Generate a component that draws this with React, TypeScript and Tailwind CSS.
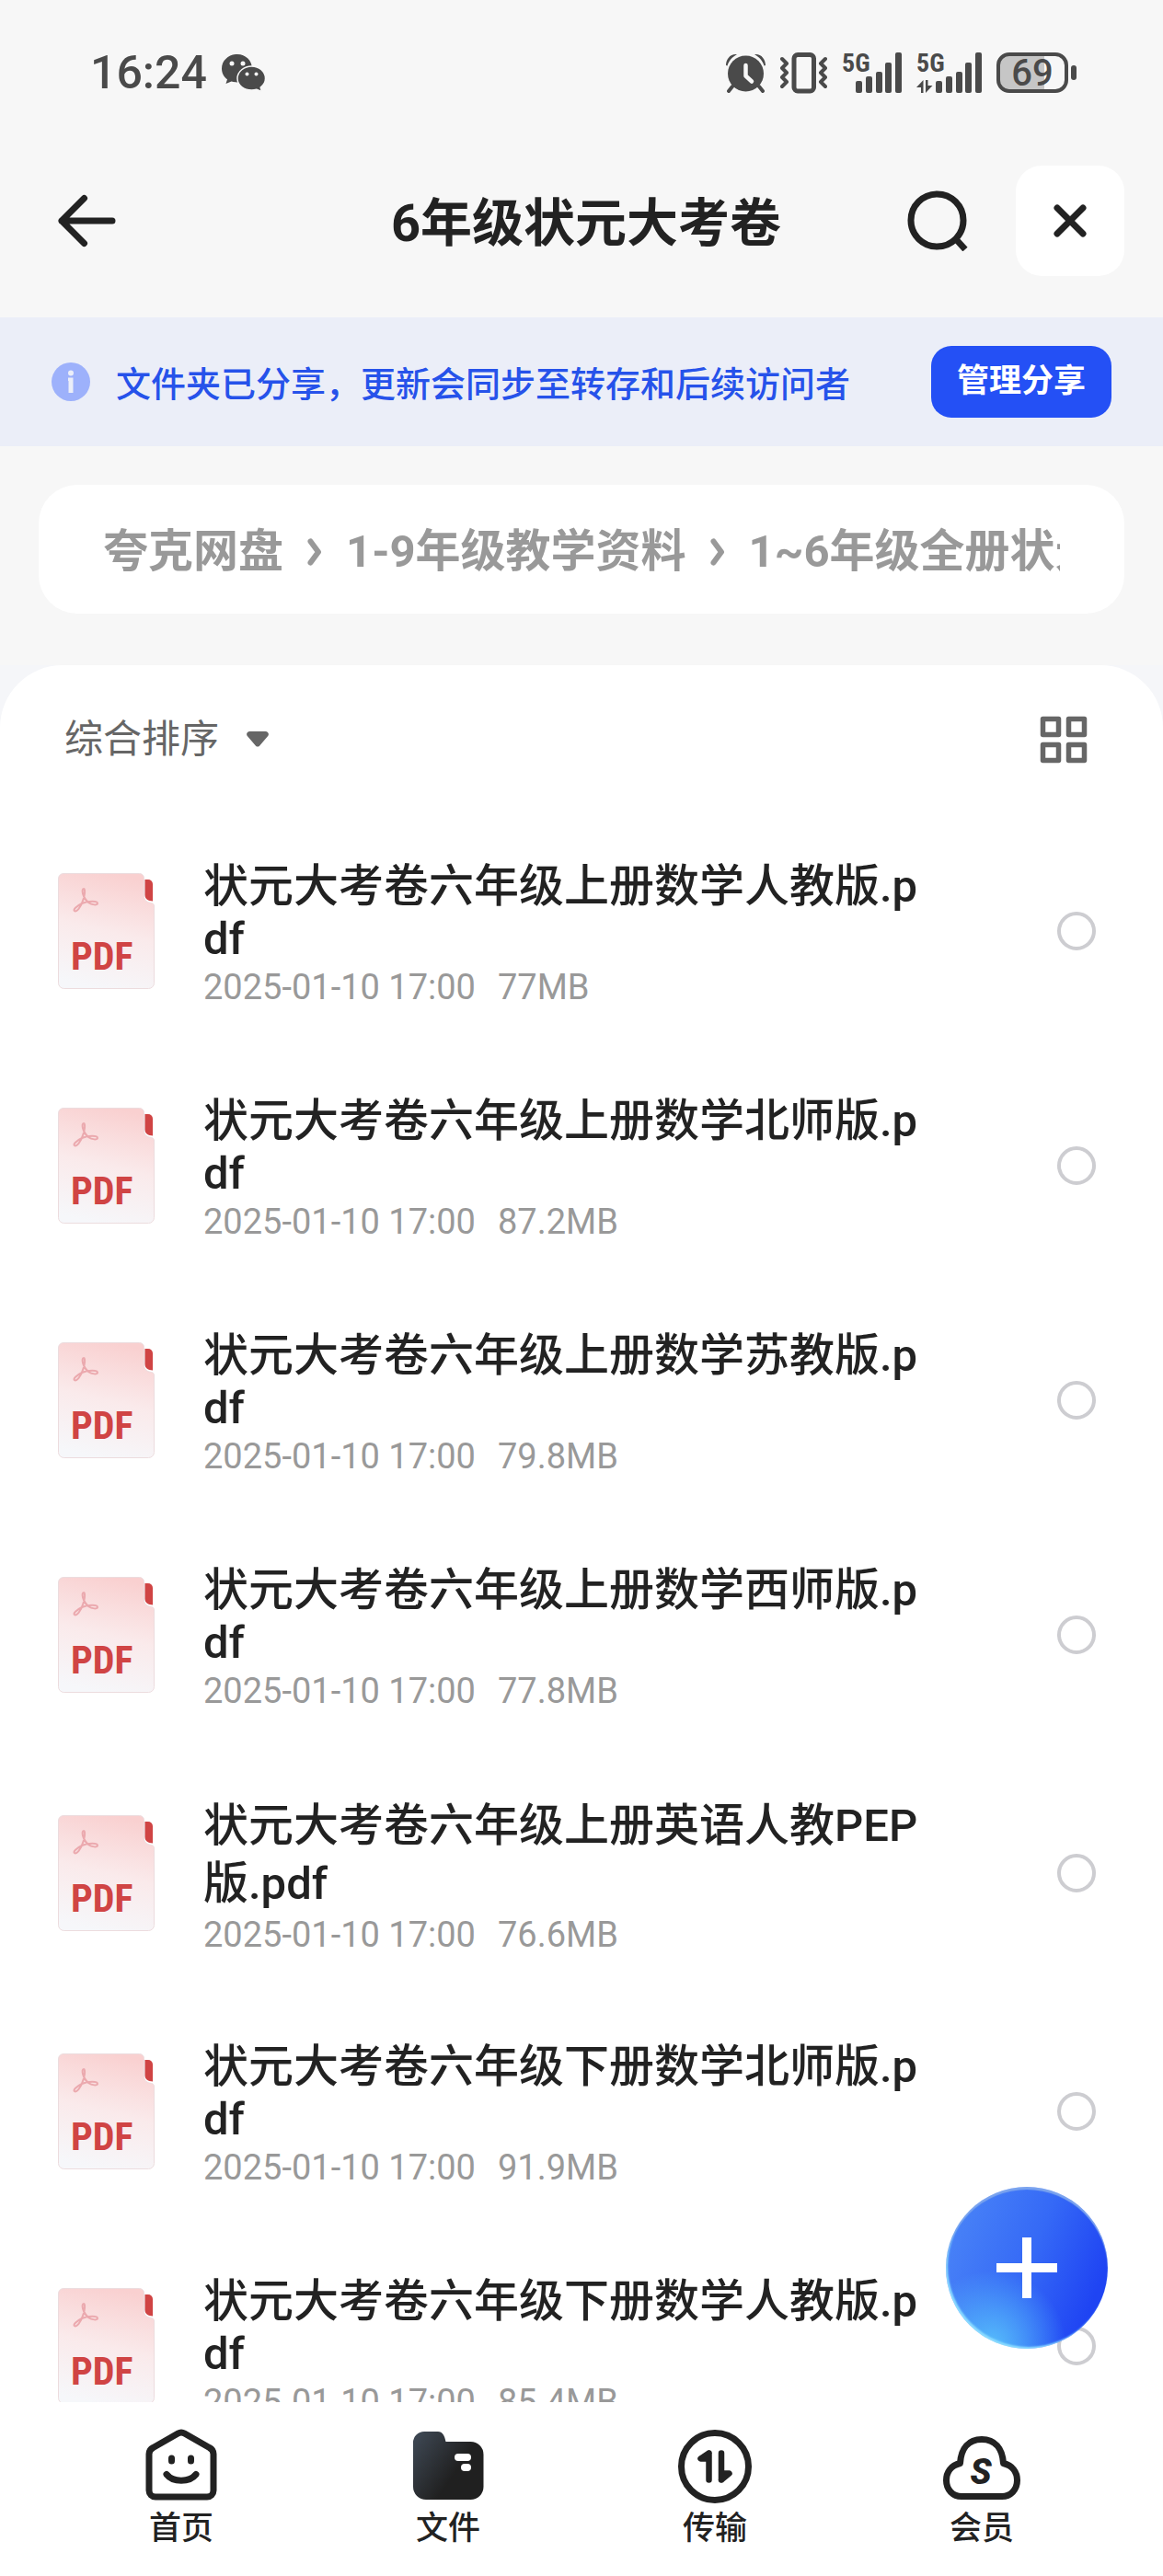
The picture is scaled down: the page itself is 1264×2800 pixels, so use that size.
import type { ReactNode } from 'react'

type FileItem = { name: string; date: string; size: string; tall?: boolean }

const files: FileItem[] = [
    { name: '状元大考卷六年级上册数学人教版.pdf', date: '2025-01-10 17:00', size: '77MB' },
    { name: '状元大考卷六年级上册数学北师版.pdf', date: '2025-01-10 17:00', size: '87.2MB' },
    { name: '状元大考卷六年级上册数学苏教版.pdf', date: '2025-01-10 17:00', size: '79.8MB' },
    { name: '状元大考卷六年级上册数学西师版.pdf', date: '2025-01-10 17:00', size: '77.8MB' },
    { name: '状元大考卷六年级上册英语人教PEP版.pdf', date: '2025-01-10 17:00', size: '76.6MB', tall: true },
    { name: '状元大考卷六年级下册数学北师版.pdf', date: '2025-01-10 17:00', size: '91.9MB' },
    { name: '状元大考卷六年级下册数学人教版.pdf', date: '2025-01-10 17:00', size: '85.4MB' },
]

const crumbs = ['夸克网盘', '1-9年级教学资料', '1~6年级全册状元大考卷']

const narrow = "'Liberation Sans Narrow', 'Roboto Condensed', Roboto, sans-serif"

function WechatIcon() {
    return (
        <svg width="48" height="42" viewBox="0 0 48 42" aria-hidden="true">
            <path
                fill="#4a4a4a"
                d="M17 1C8 1 0 7.500 0 16.500c0 5 2.300 9 6 11.700L4.500 33l6-2.600c2 .6 4.300 1 6.500 1C26 31.400 33 25 33 16.500S26 1 17 1Z"
            />
            <circle cx="11" cy="11" r="2.500" fill="#f7f7f7" />
            <circle cx="23" cy="11" r="2.500" fill="#f7f7f7" />
            <path
                fill="#4a4a4a"
                stroke="#f7f7f7"
                strokeWidth="1.500"
                d="M32.500 14C24.500 14 17 19.500 17 27.300S24.500 40 32.500 40c2 0 3.700-.3 5.400-.8L43.500 41.500l-1.300-4.500c3.300-2.400 5.300-5.800 5.300-9.700C47.500 19.500 40.500 14 32.500 14Z"
            />
            <circle cx="27.500" cy="22.500" r="2" fill="#f7f7f7" />
            <circle cx="37.500" cy="22.500" r="2" fill="#f7f7f7" />
        </svg>
    )
}

function AlarmIcon() {
    return (
        <svg width="43" height="44" viewBox="0 0 43 44" fill="none" aria-hidden="true">
            <circle cx="21.500" cy="23" r="19.500" fill="#4a4a4a" />
            <path d="M7 37l-4 5M36 37l4 5" stroke="#4a4a4a" strokeWidth="4" strokeLinecap="round" />
            <path d="M0 14C0 7 5 1 12 2 7 5 3 9 1.500 14.500ZM43 14C43 7 38 1 31 2c5 3 9 7 10.500 12.500Z" fill="#4a4a4a" />
            <path d="M21.500 14v11.500l6.500 6" stroke="#f7f7f7" strokeWidth="4.500" strokeLinecap="round" strokeLinejoin="round" />
        </svg>
    )
}

function VibrateIcon() {
    return (
        <svg width="51" height="46" viewBox="0 0 51 46" fill="none" stroke="#4a4a4a" aria-hidden="true">
            <rect x="15" y="3.500" width="21.500" height="39.500" rx="4" strokeWidth="5" />
            <path
                d="M2 8l5 5-5 5 5 5-5 5 5 5-5 5M49 8l-5 5 5 5-5 5 5 5-5 5 5 5"
                strokeWidth="4"
                strokeLinecap="round"
                strokeLinejoin="round"
            />
        </svg>
    )
}

const bars = [
    { x: 0, y: 31 },
    { x: 11, y: 26 },
    { x: 22, y: 21 },
    { x: 32, y: 11 },
    { x: 43, y: 0 },
]

function SignalIcon({ active }: { active?: boolean }) {
    const shift = active ? 21 : 15
    return (
        <svg className="overflow-visible" width={shift + 50} height="44" fill="#4a4a4a" aria-hidden="true">
            <text x="0" y="21" fontSize="28" fontWeight="700" fontFamily={narrow}>
                5G
            </text>
            {bars.map((bar) => (
                <rect key={bar.x} x={bar.x + shift} y={bar.y} width="7" height={44 - bar.y} rx="2" />
            ))}
            {active && <path d="M7.500 30v14H5V38H0zM10 44V30h2.500v6H17.500z" />}
        </svg>
    )
}

function BatteryIcon() {
    return (
        <svg className="overflow-visible" width="87" height="44" viewBox="0 0 87 44" aria-hidden="true">
            <path d="M14 4h38v36H14a10 10 0 0 1-10-10V14A10 10 0 0 1 14 4Z" fill="#c6c6c6" />
            <rect x="2" y="2" width="74" height="40" rx="12" fill="none" stroke="#4a4a4a" strokeWidth="4" />
            <rect x="81" y="14" width="6" height="16" rx="3" fill="#4a4a4a" />
            <text x="39" y="36" fontSize="40" fontWeight="500" textAnchor="middle" fill="#4a4a4a" fontFamily="Roboto">
                69
            </text>
        </svg>
    )
}

function PdfIcon() {
    return (
        <svg className="shrink-0" width="105" height="126" viewBox="0 0 105 126" aria-hidden="true">
            <defs>
                <linearGradient id="pdf-sheet" x1="0.600" y1="0" x2="0.400" y2="1">
                    <stop offset="0" stopColor="#f9d0d0" />
                    <stop offset="0.500" stopColor="#faeaeb" />
                    <stop offset="1" stopColor="#f6f7fa" />
                </linearGradient>
            </defs>
            <path
                d="M6 .5h82.500a5 5 0 0 1 5 5V25c0 5 4 7 8 7.500 2 .3 3 1.500 3 3.500v83.500a6 6 0 0 1-6 6H6.500a6 6 0 0 1-6-6V6A5.500 5.500 0 0 1 6 .5Z"
                fill="url(#pdf-sheet)"
                stroke="#ecdcde"
            />
            <path d="M94.500 7h3.500a5 5 0 0 1 5 5v18.500c-5-.5-8.500-2-8.500-7Z" fill="#d04444" />
            <path
                d="M27 30C29 26 30 17 28 17C25 17 27 27 33 32C37 35 43 35 43 33C43 30 33 30 26 33C20 36 16 40 18 41C20 43 25 37 27 30Z"
                fill="none"
                stroke="#eba9ae"
                strokeWidth="2"
            />
            <text x="14" y="105" fontSize="42" fontWeight="700" fill="#d04444" fontFamily={narrow}>
                PDF
            </text>
        </svg>
    )
}

function HomeIcon() {
    return (
        <svg width="84" height="84" viewBox="0 0 84 84" fill="none" stroke="#222" strokeLinecap="round" aria-hidden="true">
            <path
                d="M38.500 6 11.500 21.500A8 8 0 0 0 7 28.500V68a7 7 0 0 0 7 7h56a7 7 0 0 0 7-7V28.500a8 8 0 0 0-4.500-7L45.500 6a7 7 0 0 0-7 0Z"
                strokeWidth="7"
            />
            <path d="M31.500 33v3M52.500 33v3" strokeWidth="7" />
            <path d="M26 50.500c7 9 25 9 32 0" strokeWidth="7" />
        </svg>
    )
}

function FolderIcon() {
    return (
        <svg width="84" height="84" viewBox="0 0 84 84" aria-hidden="true">
            <defs>
                <linearGradient id="folder" x1="0" y1="0.200" x2="0.600" y2="0.600">
                    <stop offset="0" stopColor="#3c4550" />
                    <stop offset="1" stopColor="#202020" />
                </linearGradient>
            </defs>
            <path
                d="M16 4h15c5 0 7 4 8.500 11h27A14 14 0 0 1 80.500 29v35a14 14 0 0 1-14 14H18A14 14 0 0 1 4 64V16A12 12 0 0 1 16 4Z"
                fill="url(#folder)"
            />
            <rect x="49" y="28" width="18" height="8" rx="4" fill="#fff" />
            <rect x="56" y="39" width="11" height="8" rx="4" fill="#fff" />
        </svg>
    )
}

function TransferIcon() {
    return (
        <svg width="84" height="84" viewBox="0 0 84 84" fill="none" stroke="#222" strokeLinecap="round" strokeLinejoin="round" aria-hidden="true">
            <circle cx="42" cy="42" r="36.500" strokeWidth="7" />
            <path d="M35.500 27.500v29M35.500 27.500l-9 6h9" strokeWidth="6.500" />
            <path d="M49 27.500v29M49 56.500l8.500-7H49" strokeWidth="6.500" />
        </svg>
    )
}

function MemberIcon() {
    return (
        <svg width="84" height="84" viewBox="0 0 84 84" fill="none" aria-hidden="true">
            <path
                d="M20 74.500c-9 0-16.500-7-16.500-17.500 0-9 5-16 15-18.500C19.500 22 28 12.500 42 12.500S64.500 22 65.500 38.500c10 2.500 15 9.500 15 18.500 0 10.500-7.500 17.500-16.500 17.500Z"
                stroke="#222"
                strokeWidth="7"
                strokeLinejoin="round"
            />
            <text x="41" y="61" fontSize="38" fontWeight="900" fontStyle="italic" textAnchor="middle" fill="#222">
                S
            </text>
        </svg>
    )
}

function FileRow({ file }: { file: FileItem }) {
    return (
        <li>
            <label className={`flex items-center px-[63px] ${file.tall ? 'h-[263px]' : 'h-[255px]'}`}>
                <PdfIcon />
                <span className="ml-[53px] mr-[130px] flex-1 pt-2">
                    <span
                        className={`block break-all text-[49px] font-medium text-[#222] ${
                            file.tall ? 'leading-[63px]' : 'leading-[57px]'
                        }`}
                    >
                        {file.name}
                    </span>
                    <span className="flex gap-6 text-[38px] leading-[48px] text-[#999]">
                        <span>{file.date}</span>
                        <span>{file.size}</span>
                    </span>
                </span>
                <input
                    type="checkbox"
                    className="mr-2.5 size-[42px] shrink-0 appearance-none rounded-full border-4 border-[#cdcdd1] bg-white checked:border-[#2450f5] checked:bg-[#2450f5]"
                />
            </label>
        </li>
    )
}

function Tab({ label, current, children }: { label: string; current?: boolean; children: ReactNode }) {
    return (
        <a href="#" aria-current={current ? 'page' : undefined} className="flex flex-col items-center gap-1">
            {children}
            <span className="text-[35px] font-medium leading-[44px] text-[#222]">{label}</span>
        </a>
    )
}

export default function App() {
    return (
        <div className="flex h-screen flex-col overflow-hidden bg-[#f7f7f7] font-[Roboto,'Noto_Sans_CJK_SC',sans-serif]">
            <div className="flex h-[158px] shrink-0 items-center justify-between pl-[98px] pr-[94px]">
                <div className="flex items-center gap-4 text-[50px] font-medium text-[#4a4a4a]">
                    <span>16:24</span>
                    <WechatIcon />
                </div>
                <div className="flex items-center gap-4">
                    <AlarmIcon />
                    <VibrateIcon />
                    <SignalIcon />
                    <SignalIcon active />
                    <BatteryIcon />
                </div>
            </div>

            <header className="mb-[45px] mt-[22px] grid shrink-0 grid-cols-[1fr_auto_1fr] items-center pl-[52px] pr-[42px]">
                <button type="button" aria-label="返回" className="justify-self-start px-2.5">
                    <svg width="64" height="58" viewBox="0 0 64 58" fill="none" stroke="#222" strokeWidth="7" strokeLinecap="round" strokeLinejoin="round">
                        <path d="M29.500 4.500 5 29l24.500 24.500M5 29h55" />
                    </svg>
                </button>
                <h1 className="pt-1.5 text-[56px] font-bold leading-[68px] text-[#222]">6年级状元大考卷</h1>
                <div className="flex items-center gap-[52px] justify-self-end">
                    <button type="button" aria-label="搜索">
                        <svg width="66" height="66" viewBox="0 0 66 66" fill="none" stroke="#222" strokeWidth="7">
                            <circle cx="32.500" cy="32.500" r="28.500" />
                            <path d="M52 52l11 12" />
                        </svg>
                    </button>
                    <button type="button" aria-label="关闭" className="flex h-[120px] w-[118px] items-center justify-center rounded-[28px] bg-white">
                        <svg width="36" height="36" viewBox="0 0 36 36" stroke="#222" strokeWidth="7" strokeLinecap="round">
                            <path d="M4 4l28 28M32 4 4 32" />
                        </svg>
                    </button>
                </div>
            </header>

            <section className="flex h-[140px] shrink-0 items-center bg-[#ebeef8] px-14">
                <svg className="shrink-0" width="42" height="42" viewBox="0 0 42 42" aria-hidden="true">
                    <circle cx="21" cy="21" r="21" fill="#9db1fb" />
                    <circle cx="21" cy="11.500" r="3" fill="#ebeef8" />
                    <path d="M18 16.500h5.500V33H18.500V20H18z" fill="#ebeef8" />
                </svg>
                <p className="ml-7 flex-1 pt-1.5 text-[38px] font-medium text-[#2652ea]">
                    文件夹已分享，更新会同步至转存和后续访问者
                </p>
                <button type="button" className="h-[78px] rounded-[22px] bg-[#2450f5] px-7 text-[35px] font-bold leading-[70px] text-white">
                    管理分享
                </button>
            </section>

            <nav aria-label="路径" className="mx-[42px] mb-14 mt-[42px] shrink-0 rounded-[42px] bg-white px-[70px]">
                <ol className="flex h-[140px] items-center overflow-hidden whitespace-nowrap pt-1.5 text-[49px] font-bold text-[#999]">
                    {crumbs.map((crumb, i) => (
                        <li key={crumb} className="flex shrink-0 items-center">
                            {i > 0 && (
                                <svg className="mx-[26px]" width="16" height="30" viewBox="0 0 16 30" fill="none" stroke="#999" strokeWidth="6" strokeLinecap="round" strokeLinejoin="round">
                                    <path d="M3.500 3.500 12 15 3.500 26.500" />
                                </svg>
                            )}
                            <a href="#">{crumb}</a>
                        </li>
                    ))}
                </ol>
            </nav>

            <div className="relative flex min-h-0 flex-1 flex-col bg-[#f5f6f9]">
                <main className="min-h-0 flex-1 overflow-hidden rounded-t-[68px] bg-white">
                    <div className="flex h-[161px] items-center justify-between pl-[70px] pr-[82px]">
                        <button type="button" className="flex items-center gap-[30px] text-[42px] text-[#666]">
                            综合排序
                            <svg width="24" height="17" viewBox="0 0 24 17" fill="#666" aria-hidden="true">
                                <path d="M3.500 0h17c3 0 4.500 3 2.500 5.300L14 15.700c-1 1.200-3 1.200-4 0L1 5.300C-1 3 .5 0 3.500 0Z" />
                            </svg>
                        </button>
                        <button type="button" aria-label="切换视图">
                            <svg width="52" height="52" viewBox="0 0 52 52" fill="none" stroke="#666" strokeWidth="5.500" strokeLinejoin="round">
                                <path d="M3.500 3.500h17v17h-17zM31.500 3.500h17v17h-17zM3.500 31.500h17v17h-17zM31.500 31.500h17v17h-17z" />
                            </svg>
                        </button>
                    </div>
                    <ul>
                        {files.map((file) => (
                            <FileRow key={file.name} file={file} />
                        ))}
                    </ul>
                </main>
                <button
                    type="button"
                    aria-label="添加"
                    className="absolute bottom-[58px] right-[60px] flex size-44 items-center justify-center rounded-full bg-[radial-gradient(circle_at_28%_98%,#56bdfb,transparent_38%),linear-gradient(112deg,#4d88f7,#3569f6_50%,#1f44f3_85%)] shadow-[inset_0_3px_1px_#7ba4ee,inset_2px_-2px_2px_#8bdcff]"
                >
                    <svg width="68" height="68" viewBox="0 0 68 68" stroke="#fff" strokeWidth="10" aria-hidden="true">
                        <path d="M34 1v66M1 34h66" />
                    </svg>
                </button>
            </div>

            <nav aria-label="主导航" className="grid h-[189px] shrink-0 grid-cols-4 bg-white px-[52px] pt-7">
                <Tab label="首页">
                    <HomeIcon />
                </Tab>
                <Tab label="文件" current>
                    <FolderIcon />
                </Tab>
                <Tab label="传输">
                    <TransferIcon />
                </Tab>
                <Tab label="会员">
                    <MemberIcon />
                </Tab>
            </nav>
        </div>
    )
}
